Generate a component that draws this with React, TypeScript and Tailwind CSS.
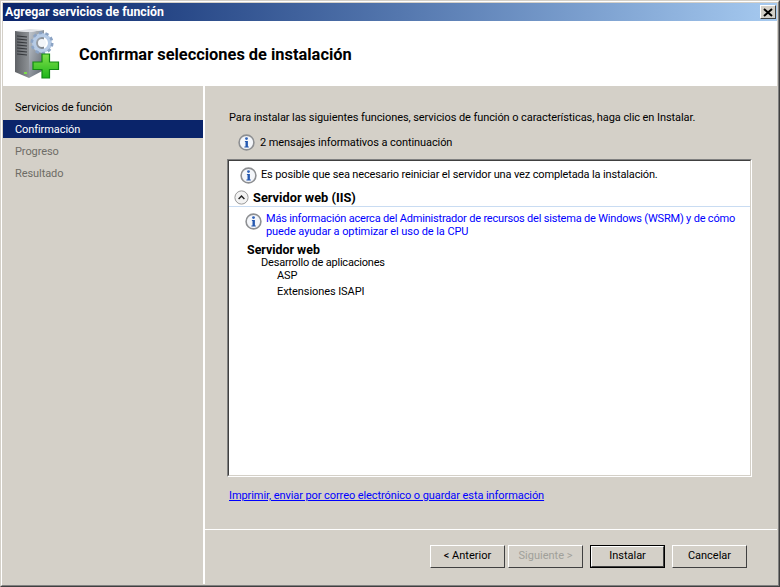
import { type ReactNode } from "react";

const font = { fontFamily: 'Roboto, sans-serif' };

function InfoIcon({ className = "" }: { className?: string }) {
  return (
    <svg width="17" height="17" viewBox="0 0 17 17" className={`shrink-0 ${className}`}>
      <circle cx="8.5" cy="8.5" r="7.4" fill="#f4f6fa" stroke="#8d8f92" strokeWidth="1.6" />
      <circle cx="8.5" cy="4.6" r="1.4" fill="#2f62b8" />
      <path d="M6.9 7h3v5.5h.9v1.1H6.4v-1.1h1.1V8.1H6.9z" fill="#2458b0" />
    </svg>
  );
}

function CollapseIcon() {
  return (
    <svg width="15" height="15" viewBox="0 0 15 15" className="shrink-0">
      <circle cx="7.5" cy="7.5" r="6.6" fill="#f3f3f3" stroke="#9a9a9a" />
      <path d="M4.6 9 7.5 6l2.9 3" fill="none" stroke="#222" strokeWidth="1.4" />
    </svg>
  );
}

function ServerIcon() {
  return (
    <svg width="52" height="56" viewBox="0 0 52 56" className="shrink-0">
      <defs>
        <linearGradient id="front" x1="0" y1="0" x2="1" y2="0">
          <stop offset="0" stopColor="#5f6266" />
          <stop offset="1" stopColor="#8e9296" />
        </linearGradient>
        <linearGradient id="side" x1="0" y1="0" x2="1" y2="1">
          <stop offset="0" stopColor="#c2c8cf" />
          <stop offset="1" stopColor="#596069" />
        </linearGradient>
        <linearGradient id="plus" x1="0" y1="0" x2="0" y2="1">
          <stop offset="0" stopColor="#7fe04a" />
          <stop offset="1" stopColor="#1fb51a" />
        </linearGradient>
      </defs>
      <path d="M5 5 19 6V52L5 46Z" fill="url(#front)" />
      <path d="M19 6 34 4V44L19 52Z" fill="url(#side)" />
      <path d="M5 5 20 3 34 4 19 6Z" fill="#dfe2e6" />
      <path d="M7 10 17 11M7 13 17 14M7 16 17 17M7 19 17 20M7 22 17 23M7 25 17 26M7 28 17 29" stroke="#34373b" strokeWidth="1.2" />
      <rect x="14" y="46" width="3" height="2" fill="#7ddc4c" />
      <circle cx="32" cy="17" r="8" fill="none" stroke="#b6cbe6" strokeWidth="4" />
      <circle cx="32" cy="17" r="10.2" fill="none" stroke="#8ba3c4" strokeWidth="2.6" strokeDasharray="3.4 3" />
      <circle cx="32" cy="17" r="4" fill="#f2f5f9" />
      <path d="M32 28h7.5v8H48.5v7.5H39.5V52H32V43.5H23V36h9Z" fill="url(#plus)" stroke="#128a12" strokeWidth="1.2" />
    </svg>
  );
}

function WizardButton({ children, disabled, primary }: { children: ReactNode; disabled?: boolean; primary?: boolean }) {
  return (
    <div className={primary ? "border border-black" : ""}>
      <div
        className={`flex items-center justify-center border border-t-white border-l-white border-r-[#404040] border-b-[#404040] bg-[#d4d0c8] text-[11px] ${
          primary ? "h-[21px] w-[73px]" : "h-[23px] w-[75px]"
        } ${disabled ? "text-[#a0a09a]" : "text-black"}`}
      >
        {children}
      </div>
    </div>
  );
}

export default function App() {
  return (
    <div
      className="h-[587px] w-[780px] overflow-hidden border border-t-[#d4d0c8] border-l-[#d4d0c8] border-r-[#404040] border-b-[#404040] bg-[#d4d0c8] text-black"
      style={font}
    >
      <div className="h-full border border-t-white border-l-white border-r-[#808080] border-b-[#808080] p-px">
        <div className="flex h-full flex-col">
          <div className="flex h-[18px] shrink-0 items-center justify-between bg-gradient-to-r from-[#0a246a] to-[#a6caf0] pr-[1px] pl-[2px]">
            <span className="pt-[1px] text-[12.3px] font-bold text-white">Agregar servicios de función</span>
            <div className="flex h-[14px] w-[16px] items-center justify-center border border-t-white border-l-white border-r-[#404040] border-b-[#404040] bg-[#d4d0c8]">
              <svg width="10" height="9" viewBox="0 0 10 9">
                <path d="M1 1 9 8M9 1 1 8" stroke="#000" strokeWidth="2" />
              </svg>
            </div>
          </div>

          <div className="flex h-[65px] shrink-0 items-center bg-white pl-[7px]">
            <ServerIcon />
            <h1 className="ml-[17px] pt-[3px] text-[16.4px] font-bold">Confirmar selecciones de instalación</h1>
          </div>

          <div className="flex min-h-0 flex-1">
            <nav className="flex w-[200px] shrink-0 flex-col gap-[4px] pt-[12px] text-[11px] tracking-[-0.08px]">
              <div className="flex h-[18px] items-center pt-[2px] pl-[12px]">Servicios de función</div>
              <div className="flex h-[18px] items-center bg-[#0a246a] pt-[2px] pl-[12px] text-white">Confirmación</div>
              <div className="flex h-[18px] items-center pt-[2px] pl-[12px] text-[#6e6c66]">Progreso</div>
              <div className="flex h-[18px] items-center pt-[2px] pl-[12px] text-[#6e6c66]">Resultado</div>
            </nav>

            <div className="flex flex-1 flex-col border-l-2 border-white">
              <div className="flex flex-1 flex-col px-[24px] pt-[23px] text-[11px] tracking-[-0.08px]">
                <p className="h-[18px] leading-[18px] whitespace-nowrap">
                  Para instalar las siguientes funciones, servicios de función o características, haga clic en Instalar.
                </p>
                <div className="mt-[6px] flex h-[18px] items-center gap-[5px] pl-[9px]">
                  <InfoIcon />
                  <span className="pt-[2px]">2 mensajes informativos a continuación</span>
                </div>
                <div className="mt-[8px] -ml-[2px] h-[318px] w-[525px] border border-t-[#808080] border-l-[#808080] border-r-white border-b-white">
                  <div className="h-full border border-t-[#404040] border-l-[#404040] border-r-[#d4d0c8] border-b-[#d4d0c8] bg-white">
                    <div className="flex h-[24px] items-center gap-[4px] pt-[4px] pl-[11px]">
                      <InfoIcon />
                      <span className="tracking-[-0.14px] whitespace-nowrap">Es posible que sea necesario reiniciar el servidor una vez completada la instalación.</span>
                    </div>
                    <div className="flex h-[22px] items-center gap-[4px] border-b border-[#c9dcf2] pt-[3px] pl-[5px] text-[12.8px] font-bold tracking-normal">
                      <CollapseIcon />
                      <span className="pt-[1px]">Servidor web (IIS)</span>
                    </div>
                    <div className="mt-[5px] flex gap-[4px] pl-[16px]">
                      <InfoIcon className="mt-[1px]" />
                      <a className="leading-[13px] whitespace-nowrap text-[#0000ff]">
                        <span className="tracking-[-0.19px]">
                          Más información acerca del Administrador de recursos del sistema de Windows (WSRM) y de cómo
                        </span>
                        <br />
                        puede ayudar a optimizar el uso de la CPU
                      </a>
                    </div>
                    <div className="mt-[5px] pl-[18px] leading-[13px]">
                      <div className="text-[12.4px] font-bold tracking-normal">Servidor web</div>
                      <div className="pl-[14px] tracking-[-0.2px]">Desarrollo de aplicaciones</div>
                      <div className="pl-[30px]">ASP</div>
                      <div className="mt-[3px] pl-[30px]">Extensiones ISAPI</div>
                    </div>
                  </div>
                </div>
                <a className="mt-[11px] leading-[16px] text-[#0000ff] underline">
                  Imprimir, enviar por correo electrónico o guardar esta información
                </a>
              </div>

              <div className="flex h-[55px] shrink-0 items-start justify-end border-t border-white pt-[15px] pr-[30px]">
                <WizardButton>&lt; Anterior</WizardButton>
                <div className="ml-[3px]">
                  <WizardButton disabled>Siguiente &gt;</WizardButton>
                </div>
                <div className="ml-[7px]">
                  <WizardButton primary>Instalar</WizardButton>
                </div>
                <div className="ml-[7px]">
                  <WizardButton>Cancelar</WizardButton>
                </div>
              </div>
            </div>
          </div>
        </div>
      </div>
    </div>
  );
}
